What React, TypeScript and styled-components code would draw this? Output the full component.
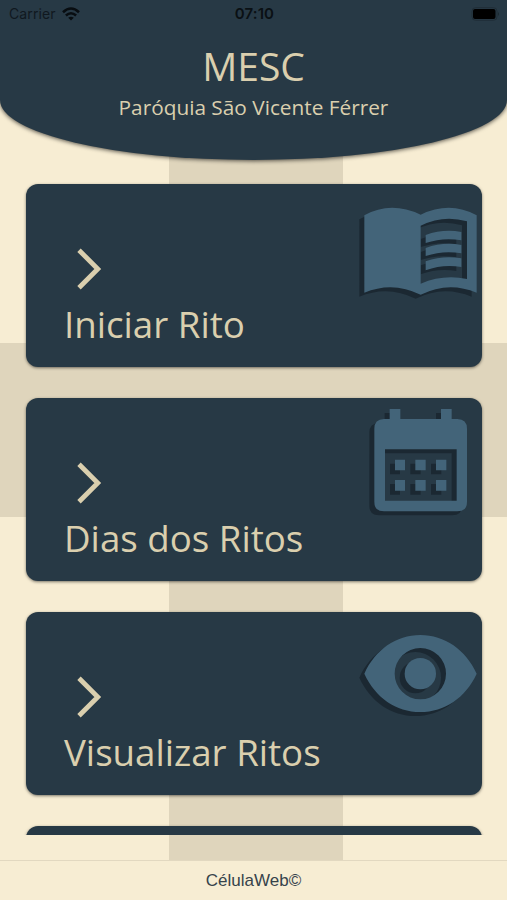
import React from "react";
import styled, { createGlobalStyle } from "styled-components";

const navy = "#273945";
const sand = "#dacfae";
const cream = "#f7edd3";
const band = "#dfd5bc";
const steel = "#436479";

const GlobalStyle = createGlobalStyle`
  *, *::before, *::after { box-sizing: border-box; }
  body { margin: 0; background: ${cream}; overflow: hidden; }
`;

const Screen = styled.div`
  width: 507px;
  height: 900px;
  display: flex;
  flex-direction: column;
  overflow: hidden;
  font-family: "Open Sans", "Noto Sans", sans-serif;
  background:
    linear-gradient(${band}, ${band}) 169px 0 / 174px 100% no-repeat,
    linear-gradient(${band}, ${band}) 0 343px / 100% 174px no-repeat,
    ${cream};
`;

const Header = styled.header`
  flex: none;
  height: 160px;
  background: ${navy};
  border-radius: 0 0 50% 50% / 0 0 60px 60px;
  box-shadow: 0 1px 4px rgba(0, 0, 0, 0.65);
  display: flex;
  flex-direction: column;
  align-items: center;
  color: ${sand};
`;

const StatusBar = styled.div`
  width: 100%;
  height: 27px;
  padding: 0 7px 0 9px;
  display: grid;
  grid-template-columns: 1fr auto 1fr;
  align-items: center;
  font-family: Inter, "Liberation Sans", sans-serif;
  color: #10181f;
`;

const Carrier = styled.span`
  display: flex;
  align-items: center;
  gap: 6px;
  font-size: 14px;
  letter-spacing: 0.1px;
`;

const Clock = styled.span`
  font-size: 15px;
  font-weight: 600;
  letter-spacing: 0.1px;
  color: #0a1014;
`;

const BatterySlot = styled.span`
  display: flex;
  justify-content: flex-end;
`;

const Title = styled.h1`
  margin: 14px 0 0;
  font-size: 39px;
  line-height: 50px;
  font-weight: 400;
`;

const Subtitle = styled.p`
  margin: 2px 0 0;
  font-size: 20.8px;
  line-height: 29px;
  white-space: nowrap;
`;

const List = styled.main`
  flex: none;
  height: 675px;
  padding: 24px 25.5px 0 26px;
  display: flex;
  flex-direction: column;
  gap: 31px;
  overflow: hidden;
`;

const Card = styled.button`
  flex: none;
  height: 183px;
  padding: 0;
  border: 0;
  border-radius: 12px;
  background: ${navy};
  box-shadow: 0 1px 3px rgba(0, 0, 0, 0.5);
  display: flex;
  justify-content: space-between;
  align-items: flex-start;
  text-align: left;
  font-family: inherit;
  color: ${sand};
`;

const CardText = styled.span`
  padding: 64px 0 0 38px;
  display: flex;
  flex-direction: column;
`;

const Chevron = styled.svg`
  width: 26px;
  height: 42px;
  margin-left: 12px;
`;

const Label = styled.span`
  margin-top: 7px;
  font-size: 36.7px;
  line-height: 54px;
  white-space: nowrap;
`;

const Art = styled.svg`
  flex: none;
  width: 142px;
  height: 140px;
  margin-left: -20px;
  fill: ${steel};
  filter: drop-shadow(-4.5px 4px 0.7px #1b2832);
`;

const Footer = styled.footer`
  flex: none;
  margin-top: 25px;
  height: 40px;
  border-top: 1px solid #e2d8c0;
  background: ${cream};
  display: flex;
  align-items: center;
  justify-content: center;
  font-family: "Liberation Sans", Arial, sans-serif;
  font-size: 17px;
  color: #36434b;
`;

const WifiIcon = () => (
  <svg width="18" height="14" viewBox="0 0 18 14" fill="none" stroke="#080d11" strokeWidth="2.6">
    <path d="M1 5.2Q9-2.2 17 5.2M3.9 8.5Q9 4 14.1 8.5" />
    <path d="M6.2 10.7Q9 8.6 11.8 10.7L9 13.4Z" fill="#080d11" stroke="none" />
  </svg>
);

const BatteryIcon = () => (
  <svg width="29" height="14" viewBox="0 0 29 14">
    <rect x="1" y="0.7" width="25" height="12.6" rx="3.5" fill="none" stroke="#202e37" />
    <rect x="2" y="2" width="22.5" height="10" rx="2" fill="#000" />
    <path d="M27 5Q29 7 27 9Z" fill="#1c2932" />
  </svg>
);

const BookArt = () => (
  <Art viewBox="0 12 426 420">
    <path
      fillRule="evenodd"
      d="M73 106Q152 62 242 104Q330 62 410 106V338Q325 302 242 344Q158 302 73 338ZM242 137V311Q310 282 381 297V124Q310 103 242 137Z"
    />
    <path d="M257 165Q310 146 364 156V181Q310 171 257 189ZM257 204Q310 185 364 195V220Q310 210 257 228ZM257 244Q310 225 364 235V261Q310 251 257 271Z" />
  </Art>
);

const CalendarArt = () => (
  <Art viewBox="0 24 426 420">
    <path
      fillRule="evenodd"
      d="M149 57H181V87H303V57H335V87H352Q381 88 381 116V335Q381 364 352 364H132Q103 364 103 335V116Q103 88 132 87H149ZM135 178V332H350V178Z"
    />
    <path d="M165 209H195V241H165ZM226 209H257V241H226ZM288 209H319V241H288ZM165 270H195V302H165ZM226 270H257V302H226ZM288 270H319V302H288Z" />
  </Art>
);

const EyeArt = () => (
  <Art viewBox="0 6 426 420">
    <path
      fillRule="evenodd"
      d="M73 191C106 119 168 75 241 75S377 119 410 191C377 263 314 306 241 306S106 263 73 191ZM241 114A77 77 0 1 0 241 268A77 77 0 1 0 241 114Z"
    />
    <circle cx="241" cy="191" r="47" />
  </Art>
);

const items = [
  { label: "Iniciar Rito", Icon: BookArt },
  { label: "Dias dos Ritos", Icon: CalendarArt },
  { label: "Visualizar Ritos", Icon: EyeArt },
];

export default function App() {
  return (
    <>
      <GlobalStyle />
      <Screen>
        <Header>
          <StatusBar>
            <Carrier>
              Carrier <WifiIcon />
            </Carrier>
            <Clock>07:10</Clock>
            <BatterySlot>
              <BatteryIcon />
            </BatterySlot>
          </StatusBar>
          <Title>MESC</Title>
          <Subtitle>Paróquia São Vicente Férrer</Subtitle>
        </Header>
        <List>
          {items.map(({ label, Icon }) => (
            <Card key={label}>
              <CardText>
                <Chevron viewBox="0 0 26 42" fill="none" stroke={sand} strokeWidth="4.8">
                  <path d="M3 2.2L21.8 21L3 39.8" />
                </Chevron>
                <Label>{label}</Label>
              </CardText>
              <Icon />
            </Card>
          ))}
          <Card aria-hidden="true" />
        </List>
        <Footer>CélulaWeb©</Footer>
      </Screen>
    </>
  );
}
